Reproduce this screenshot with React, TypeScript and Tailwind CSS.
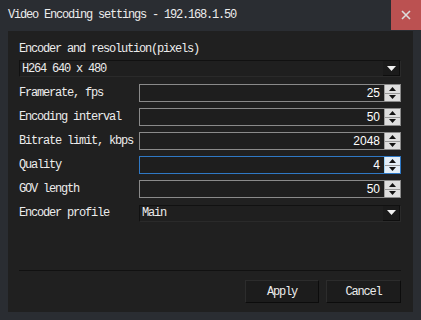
import React from "react";

const mono = "font-['SimSun','Liberation_Mono',monospace] text-[12px] tracking-[-1.2px] text-[#ececec]";

function SpinBox({ value, active }: { value: string; active?: boolean }) {
  return (
    <div className={`flex h-[18px] flex-1 items-stretch border ${active ? "border-[#2f78c4]" : "border-[#8a8a8a]"} bg-[#1e1e1e]`}>
      <div className="flex flex-1 items-center justify-end pr-[4px] font-['Liberation_Sans',sans-serif] text-[12px] text-white">{value}</div>
      <div className={`flex w-[16px] flex-col border-l ${active ? "border-[#9fd3f5] bg-[#e4eef6]" : "border-[#a0a0a0] bg-[#dedede]"}`}>
        <div className="flex flex-1 items-center justify-center border-b border-[#9a9a9a]">
          <svg width="7" height="4" viewBox="0 0 7 4"><path d="M3.5 0L7 4H0z" fill="#111" /></svg>
        </div>
        <div className="flex flex-1 items-center justify-center">
          <svg width="7" height="4" viewBox="0 0 7 4"><path d="M0 0h7L3.5 4z" fill="#111" /></svg>
        </div>
      </div>
    </div>
  );
}

function Combo({ text }: { text: string }) {
  return (
    <div className="flex h-[17px] flex-1 items-center border border-t-[#111] border-l-[#111] border-r-[#2a2a2a] border-b-[#2a2a2a] bg-[#1f1f1f]">
      <span className={`${mono} flex-1 pl-[2px]`}>{text}</span>
      <div className="flex h-full w-[17px] items-center justify-center border-r border-b border-[#0e0e0e] bg-[#1b1b1b]">
        <svg width="9" height="5" viewBox="0 0 9 5"><path d="M0 0h9L4.5 5z" fill="#f2f2f2" /></svg>
      </div>
    </div>
  );
}

const rows = [
  { label: "Framerate, fps", value: "25" },
  { label: "Encoding interval", value: "50" },
  { label: "Bitrate limit, kbps", value: "2048" },
  { label: "Quality", value: "4", active: true },
  { label: "GOV length", value: "50" },
];

export default function App() {
  return (
    <div className="flex h-[320px] w-[421px] flex-col bg-[#2a2d32]">
      <div className="flex h-[31px] items-start">
        <div className={`${mono} flex h-[30px] flex-1 items-center pl-[8px]`}>Video Encoding settings - 192.168.1.50</div>
        <div className="flex h-[30px] w-[30px] items-center justify-center bg-[#bb5151]">
          <svg width="10" height="10" viewBox="0 0 10 10"><path d="M1 1l8 8M9 1l-8 8" stroke="#dcdcdc" strokeWidth="1.6" /></svg>
        </div>
      </div>
      <div className="mx-[8px] flex h-[281px] flex-col bg-[#202020] pl-[11px] pr-[12px] pt-[11px]">
        <div className={`${mono} h-[14px] leading-[14px]`}>Encoder and resolution(pixels)</div>
        <div className="mt-[4px] flex">
          <Combo text="H264 640 x 480" />
        </div>
        <div className="mt-[7px] flex flex-col gap-[6px]">
          {rows.map((r) => (
            <div key={r.label} className="flex items-center">
              <div className={`${mono} w-[120px]`}>{r.label}</div>
              <SpinBox value={r.value} active={r.active} />
            </div>
          ))}
          <div className="flex items-center">
            <div className={`${mono} w-[120px]`}>Encoder profile</div>
            <Combo text="Main" />
          </div>
        </div>
        <div className="mt-[48px] h-px bg-[#111]" />
        <div className="mt-[9px] flex justify-end gap-[7px]">
          <button className={`${mono} h-[23px] w-[74px] border border-t-[#2c2c2c] border-l-[#2c2c2c] border-r-[#0c0c0c] border-b-[#0c0c0c] bg-[#1c1c1c]`}>Apply</button>
          <button className={`${mono} h-[23px] w-[75px] border border-t-[#2c2c2c] border-l-[#2c2c2c] border-r-[#0c0c0c] border-b-[#0c0c0c] bg-[#1c1c1c]`}>Cancel</button>
        </div>
      </div>
    </div>
  );
}
